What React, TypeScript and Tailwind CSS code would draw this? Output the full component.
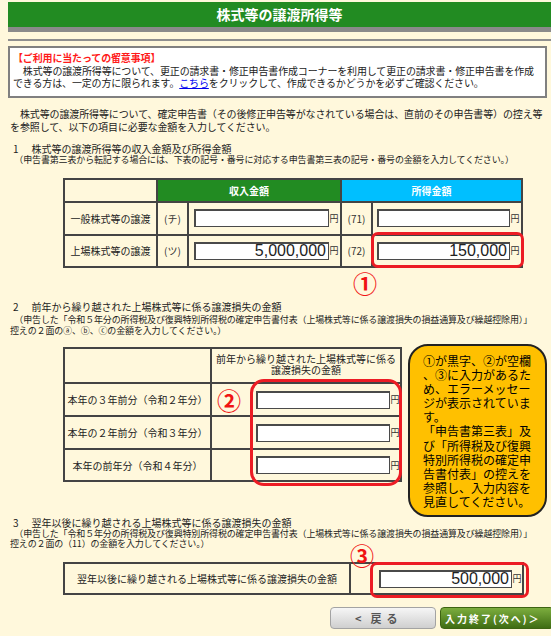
import React from "react";

const calloutLines = [
  "①が黒字、②が空欄",
  "、③に入力があるた",
  "め、エラーメッセー",
  "ジが表示されていま",
  "す。",
  "「申告書第三表」及",
  "び「所得税及び復興",
  "特別所得税の確定申",
  "告書付表」の控えを",
  "参照し、入力内容を",
  "見直してください。",
];

const IDSP = "\u3000";

// input box + 円 suffix
function AmountInput({ value = "", className }: { value?: string; className: string }) {
  return (
    <div className="flex items-center">
      <div
        className={`${className} flex h-[18px] items-center justify-end border border-[#4a4a4a] bg-white pr-[2px] font-['Liberation_Sans',Arial,sans-serif] text-[16px] leading-none text-[#222] shadow-[inset_1px_1px_0_#4a4a4a]`}
      >
        {value}
      </div>
      <span className="w-[10px] text-center text-[9px] leading-none text-[#333]">円</span>
    </div>
  );
}

function Circled({ children, className }: { children: React.ReactNode; className: string }) {
  return (
    <span className={`absolute text-[24px] font-bold leading-none text-[#f01414] ${className}`}>{children}</span>
  );
}

function SectionTitle({ num, children }: { num: string; children: React.ReactNode }) {
  return (
    <div className="ml-[2px] whitespace-nowrap text-[10px] leading-[13px]">
      <span className="ml-[3px]">{num}</span>
      <span className="ml-[13px]">{children}</span>
    </div>
  );
}

function Note({ lines }: { lines: string[] }) {
  return (
    <div className="ml-[2px] text-[9px] leading-[10.5px] tracking-[-0.15px]">
      {lines.map((l, i) => (
        <div key={i} className="whitespace-nowrap">
          {l}
        </div>
      ))}
    </div>
  );
}

export default function App() {
  const cell = "flex items-center justify-center bg-[#fff8dc]";
  const inputCell = "flex items-center justify-end bg-[#fff8dc]";

  return (
    <div className="h-[636px] w-full overflow-hidden bg-[#fff8dc] pl-[8px] pt-[2px] font-['Noto_Sans_CJK_JP','Noto_Sans',sans-serif] text-[#222]">
      {/* page title */}
      <div className="flex h-[30px] items-center justify-center border-b-[5px] border-[#8a8a8a] bg-[#228b22] text-[14px] font-bold text-white">
        株式等の譲渡所得等
      </div>
      <div className="mt-[7px] h-[2px] bg-[#8f8f8f]" />

      {/* notice */}
      <div className="mr-[4px] mt-[5px] h-[52px] border-2 border-[#808080] bg-white px-[3px] pt-[4px] text-[10px] leading-[12.5px] tracking-[-0.15px]">
        <div className="whitespace-nowrap font-bold text-[#ff1a1a]">【ご利用に当たっての留意事項】</div>
        <div className="whitespace-nowrap">
          {IDSP + "株式等の譲渡所得等について、更正の請求書・修正申告書作成コーナーを利用して更正の請求書・修正申告書を作成"}
        </div>
        <div className="whitespace-nowrap">
          できる方は、一定の方に限られます。
          <a href="#" className="text-[#0000ee] underline">
            こちら
          </a>
          をクリックして、作成できるかどうかを必ずご確認ください。
        </div>
      </div>

      <div className="ml-[2px] mt-[8.5px] text-[10px] leading-[13px] tracking-[-0.12px]">
        <div className="whitespace-nowrap">
          {IDSP + "株式等の譲渡所得等について、確定申告書（その後修正申告等がなされている場合は、直前のその申告書等）の控え等"}
        </div>
        <div className="whitespace-nowrap">を参照して、以下の項目に必要な金額を入力してください。</div>
      </div>

      {/* section 1 */}
      <div className="mt-[9px]">
        <SectionTitle num="1">株式等の譲渡所得等の収入金額及び所得金額</SectionTitle>
        <Note
          lines={[
            IDSP + "（申告書第三表から転記する場合には、下表の記号・番号に対応する申告書第三表の記号・番号の金額を入力してください。）",
          ]}
        />
      </div>

      <div className="relative ml-[55px] mt-[12.5px] w-[460px]">
        <div className="grid grid-cols-[91px_29px_151px_29px_148px] grid-rows-[21px_31px_30px] gap-[2px] border-2 border-[#444] bg-[#444] text-[10px]">
          <div className="bg-[#fff8dc]" />
          <div className="col-span-2 flex items-center justify-center bg-[#228b22] font-bold text-white">収入金額</div>
          <div className="col-span-2 flex items-center justify-center bg-[#00bfff] font-bold text-white">所得金額</div>

          <div className={cell}>一般株式等の譲渡</div>
          <div className={`${cell} text-[#333]`}>(チ)</div>
          <div className={`${inputCell} pr-[1px]`}>
            <AmountInput className="w-[135px]" />
          </div>
          <div className={`${cell} text-[#333]`}>(71)</div>
          <div className={`${inputCell} pr-[1px]`}>
            <AmountInput className="w-[133px]" />
          </div>

          <div className={cell}>上場株式等の譲渡</div>
          <div className={`${cell} text-[#333]`}>(ツ)</div>
          <div className={`${inputCell} pr-[1px]`}>
            <AmountInput className="w-[135px]" value="5,000,000" />
          </div>
          <div className={`${cell} text-[#333]`}>(72)</div>
          <div className={`${inputCell} pr-[1px]`}>
            <AmountInput className="w-[133px]" value="150,000" />
          </div>
        </div>
        <div className="absolute left-[308px] top-[54px] h-[36px] w-[153px] rounded-[7px] border-[3px] border-[#ec1c24]" />
        <Circled className="left-[290px] top-[93px]">①</Circled>
      </div>

      {/* section 2 */}
      <div className="mt-[32.5px]">
        <SectionTitle num="2">前年から繰り越された上場株式等に係る譲渡損失の金額</SectionTitle>
        <div className="mt-[2px]">
          <Note
            lines={[
              IDSP + "（申告した「令和５年分の所得税及び復興特別所得税の確定申告書付表（上場株式等に係る譲渡損失の損益通算及び繰越控除用）」",
              "控えの２面のⓐ、ⓑ、ⓒの金額を入力してください。）",
            ]}
          />
        </div>
      </div>

      <div className="mt-[8px] flex items-start">
        <div className="relative ml-[55px] mt-[3px] w-[339px]">
          <div className="grid grid-cols-[145px_188px] grid-rows-[33px_31px_31px_30px] gap-[2px] border-2 border-[#444] bg-[#444] text-[10px]">
            <div className="bg-[#fff8dc]" />
            <div className="flex flex-col items-center bg-[#fff8dc] pt-[4px] leading-[11px]">
              <span>前年から繰り越された上場株式等に係る</span>
              <span>譲渡損失の金額</span>
            </div>

            <div className={cell}>本年の３年前分（令和２年分）</div>
            <div className={inputCell}>
              <AmountInput className="w-[134px]" />
            </div>
            <div className={cell}>本年の２年前分（令和３年分）</div>
            <div className={inputCell}>
              <AmountInput className="w-[134px]" />
            </div>
            <div className={cell}>本年の前年分（令和４年分）</div>
            <div className={inputCell}>
              <AmountInput className="w-[134px]" />
            </div>
          </div>
          <div className="absolute left-[187px] top-[32px] h-[107px] w-[152px] rounded-[14px] border-[3px] border-[#ec1c24]" />
          <Circled className="left-[154px] top-[41px]">②</Circled>
        </div>

        <div className="ml-[6px] h-[173px] w-[139px] rounded-[20px] border-2 border-[#222] bg-[#ffc000] pl-[13px] pt-[8px] text-[12px] leading-[14.1px] text-black">
          {calloutLines.map((l, i) => (
            <div key={i} className="whitespace-nowrap">
              {l}
            </div>
          ))}
        </div>
      </div>

      {/* section 3 */}
      <div className="mt-[-1.5px]">
        <SectionTitle num="3">翌年以後に繰り越される上場株式等に係る譲渡損失の金額</SectionTitle>
        <Note
          lines={[
            IDSP + "（申告した「令和５年分の所得税及び復興特別所得税の確定申告書付表（上場株式等に係る譲渡損失の損益通算及び繰越控除用）」",
            "控えの２面の（11）の金額を入力してください。）",
          ]}
        />
      </div>

      <div className="relative ml-[55px] mt-[12.5px] w-[461px]">
        <div className="grid grid-cols-[284px_171px] grid-rows-[29px] gap-[2px] border-2 border-[#444] bg-[#444] text-[10px]">
          <div className={cell}>翌年以後に繰り越される上場株式等に係る譲渡損失の金額</div>
          <div className={inputCell}>
            <AmountInput className="w-[133px]" value="500,000" />
          </div>
        </div>
        <div className="absolute left-[307px] top-0 h-[36px] w-[159px] rounded-[7px] border-[3px] border-[#ec1c24]" />
        <Circled className="left-[287px] top-[-19px]">③</Circled>
      </div>

      {/* buttons */}
      <div className="mt-[12px] flex justify-end gap-[4px]">
        <button className="flex h-[22px] w-[106px] items-center rounded-[4px] border border-[#a3a3a3] bg-[linear-gradient(to_bottom,#f6f6f6,#cfcfcf)] pl-[24px] text-[11px] font-bold text-[#555]">
          <span>&lt;</span>
          <span className="ml-[9px]">戻</span>
          <span className="ml-[5px]">る</span>
        </button>
        <button className="-mr-[3px] flex h-[22px] w-[114px] items-center rounded-[4px] border border-[#3e6412] bg-[linear-gradient(to_bottom,#7cad3e,#3f6d13)] pl-[4px] text-[10px] font-bold tracking-[2px] text-white">
          入力終了(次へ)＞
        </button>
      </div>
    </div>
  );
}
